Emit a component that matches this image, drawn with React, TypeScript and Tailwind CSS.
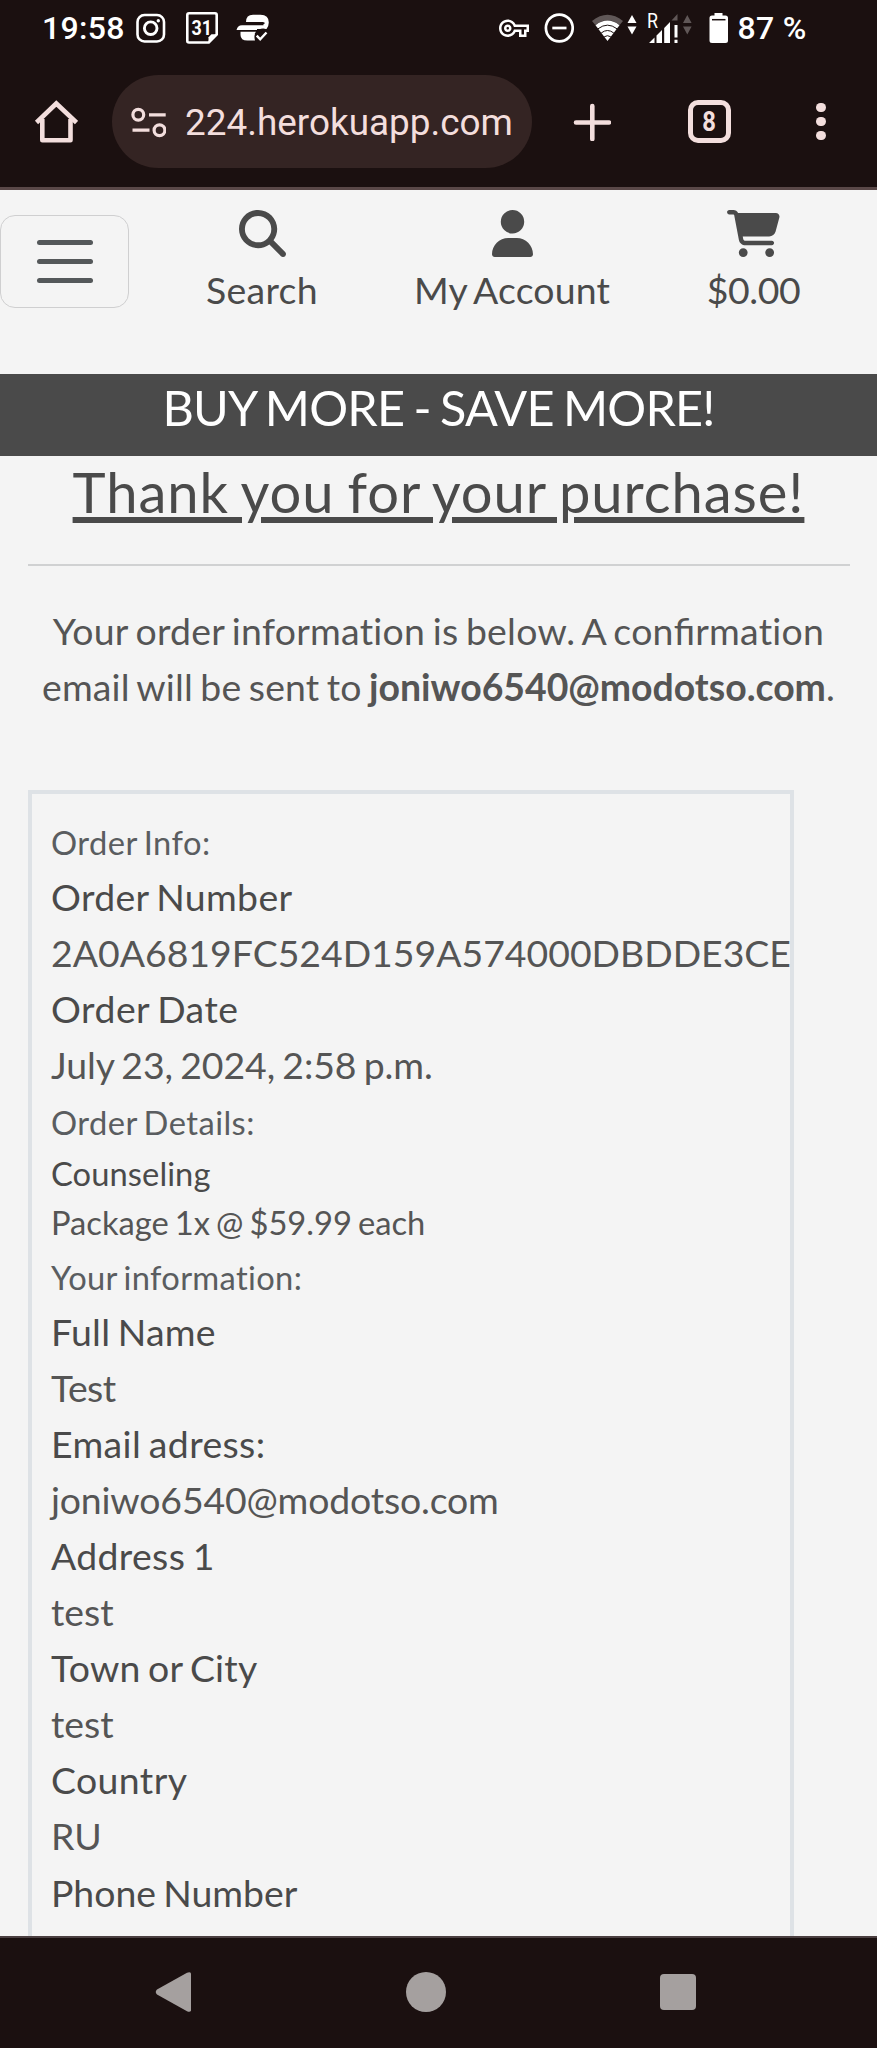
import type { ReactNode } from "react";
import { FaCartShopping, FaMagnifyingGlass, FaUser } from "react-icons/fa6";

function StatusBar() {
  return (
    <div className="flex h-14 items-start font-[Roboto,sans-serif] text-[32px] leading-[56px] font-medium text-white">
      <span className="ml-[42px] w-[94px] shrink-0 tracking-[0.3px] whitespace-nowrap">19:58</span>
      <svg className="h-14 w-[30px] shrink-0" viewBox="136 0 30 56" fill="none" stroke="currentColor" strokeWidth="2.6">
        <rect x="137.5" y="15" width="26.500" height="26.500" rx="7" />
        <circle cx="150.700" cy="28.200" r="6.300" strokeWidth="2.900" />
        <circle cx="158.300" cy="20.700" r="1.700" fill="currentColor" stroke="none" />
      </svg>
      <svg className="ml-5 h-14 w-8 shrink-0" viewBox="186 0 32 56" fill="none" stroke="currentColor" strokeWidth="2.6">
        <path d="M189 13.3H215Q216.700 13.300 216.700 15V34.500L208.800 42.500H189Q187.300 42.500 187.300 41V15Q187.300 13.300 189 13.300Z" />
        <path d="M216 34.200H211.500L208.500 37.200V42Z" fill="currentColor" stroke="none" />
        <text x="191.600" y="34.700" fontSize="20" fontWeight="700" textLength="20.500" lengthAdjust="spacingAndGlyphs" fill="currentColor" stroke="none">31</text>
      </svg>
      <svg className="ml-[18px] h-14 w-[34px] shrink-0" viewBox="236 0 34 56">
        <path d="M246 22Q246 14.700 253 14.700H260.500Q268.800 14.700 268.800 22.500Q268.800 26 266.500 29H257V30H236.500Q237.500 25.500 242 25.300H263.500V22Z" fill="currentColor" />
        <path d="M240.500 31.800H256Q253.500 35.500 255 40.500H247.500Q240.500 40.500 240.500 35Z" fill="currentColor" />
        <path d="M246.500 23.200H264.500" stroke="#1b1010" strokeWidth="1.600" />
        <path d="M255.500 34.500Q261 27 268 31" fill="none" stroke="#1b1010" strokeWidth="2.200" />
        <path d="M256.700 35.700L260.200 39.300L266.500 32.500" fill="none" stroke="currentColor" strokeWidth="2.400" />
      </svg>
      <svg className="ml-[229px] h-14 w-[30px] shrink-0" viewBox="0 -10.600 24 44.800" fill="currentColor">
        <path d="M22 19h-6v-4h-2.680c-1.140 2.420-3.600 4-6.320 4-3.860 0-7-3.140-7-7s3.140-7 7-7c2.720 0 5.170 1.580 6.320 4H24v6h-2v4zm-4-2h2v-4h2v-2H11.940l-.23-.67C11.010 8.340 9.110 7 7 7c-2.760 0-5 2.240-5 5s2.240 5 5 5c2.110 0 4.010-1.340 4.710-3.330l.23-.67H18v4zM7 15c-1.650 0-3-1.350-3-3s1.350-3 3-3 3 1.350 3 3-1.350 3-3 3zm0-4c-.55 0-1 .45-1 1s.45 1 1 1 1-.45 1-1-.45-1-1-1z" />
      </svg>
      <svg className="ml-[15px] h-14 w-[30px] shrink-0" viewBox="544 0 30 56" fill="none" stroke="currentColor" strokeWidth="2.700">
        <circle cx="559.300" cy="28" r="13.400" />
        <path d="M552.300 28H566.500" />
      </svg>
      <svg className="ml-[18px] h-14 w-[46px] shrink-0" viewBox="592 0 46 56">
        <path d="M592 21Q607.500 8.500 623 21L619.700 25Q607.500 15.500 595.300 25Z" fill="#605757" />
        <path d="M595.500 25.200Q607.500 16 619.500 25.200L607.500 41Z" fill="currentColor" />
        <path d="M598 28.800Q607.500 21.500 617 28.800M601.200 33Q607.500 28 613.800 33M604.200 36.800Q607.500 34.600 610.800 36.800" fill="none" stroke="#1b1010" strokeWidth="1" />
        <path d="M632 15L636.500 23H627.500ZM632 34.500L627.500 26.500H636.500Z" fill="currentColor" />
      </svg>
      <svg className="ml-[9px] h-14 w-[46px] shrink-0" viewBox="647 0 46 56" fill="currentColor">
        <text x="647" y="27.500" fontSize="20" fontWeight="400" textLength="11" lengthAdjust="spacingAndGlyphs">R</text>
        <path d="M649 43L654.500 37.500V43ZM656.500 35.500L662 30V43H656.500ZM664.200 28L670 22V43H664.200Z" />
        <path d="M671.500 20.500L677.500 14V20.500Z" fill="#605757" />
        <path d="M674.500 25H677.500V37.500H674.500ZM674.500 39.800H677.500V43H674.500Z" />
        <path d="M687.300 15L691.600 23H683ZM687.300 34.500L683 26.500H691.600Z" fill="#605757" />
      </svg>
      <svg className="ml-4 h-14 w-5 shrink-0" viewBox="709 0 20 56">
        <path d="M714.500 13H722.500V15.500H725.500Q728 15.500 728 18V40.500Q728 43 725.500 43H712Q709.500 43 709.500 40.500V18Q709.500 15.500 712 15.500H714.500Z" fill="currentColor" />
        <path d="M712 19.700H725.500" stroke="#1b1010" strokeWidth="1.500" />
      </svg>
      <span className="ml-[8.500px] tracking-[0.3px] whitespace-nowrap">87 %</span>
    </div>
  );
}

function BrowserBar() {
  return (
    <div className="flex h-[131px] items-center text-[#f3dedd]">
      <svg className="ml-[34px] h-[46px] w-11 shrink-0" viewBox="34 99 44 46" fill="none" stroke="currentColor" strokeWidth="4.600" strokeLinejoin="round">
        <path d="M36.500 122.500L56.300 103.500L76.500 122.500" strokeLinejoin="miter" />
        <path d="M42.300 119V140.200H70.500V119" />
      </svg>
      <div className="ml-[34px] flex h-[93px] w-[420px] shrink-0 items-center overflow-hidden rounded-full bg-[#342423]">
        <svg className="ml-[18px] h-8 w-9 shrink-0" viewBox="130 105 36 32" fill="none" stroke="currentColor" strokeWidth="3.200">
          <circle cx="138.300" cy="113.800" r="5.400" />
          <circle cx="159.500" cy="129.200" r="5.400" />
          <path d="M149 113.800H165.700M132.500 129.200H149.500" />
        </svg>
        <span className="ml-[19px] pt-[3px] font-[Roboto,sans-serif] text-[36.900px] leading-[50px] whitespace-nowrap">224.herokuapp.com</span>
      </div>
      <svg className="ml-[41px] h-[38px] w-[38px] shrink-0" viewBox="573 102 38 38" fill="none" stroke="currentColor" strokeWidth="4.600" strokeLinecap="round">
        <path d="M576 121.500H609M592.300 105V138" />
      </svg>
      <div className="ml-[77px] flex h-[43px] w-[43px] shrink-0 items-center justify-center rounded-[10px] border-[5px] border-[#f3dedd] font-[Roboto,sans-serif] text-[28px] leading-none font-bold">
        <span className="block scale-x-[0.85]">8</span>
      </div>
      <div className="ml-[85px] flex flex-col gap-[4.500px]">
        <i className="size-[9.600px] rounded-full bg-[#f3dedd]" />
        <i className="size-[9.600px] rounded-full bg-[#f3dedd]" />
        <i className="size-[9.600px] rounded-full bg-[#f3dedd]" />
      </div>
    </div>
  );
}

function NavItem({ className, icon, label }: { className: string; icon: ReactNode; label: string }) {
  return (
    <a className={`flex shrink-0 flex-col items-center text-[#4a4a4a] ${className}`}>
      {icon}
      <span className="mt-[4.500px] leading-[56px] whitespace-nowrap">{label}</span>
    </a>
  );
}

function SiteHeader() {
  return (
    <header className="flex h-[184px] shrink-0 items-start">
      <button className="mt-[25px] flex h-[93px] w-[129px] shrink-0 flex-col items-center justify-center gap-[14px] rounded-[15px] border-[1.500px] border-[#cfcfd0]">
        <span className="h-[4.700px] w-14 rounded-full bg-[#54585a]" />
        <span className="h-[4.700px] w-14 rounded-full bg-[#54585a]" />
        <span className="h-[4.700px] w-14 rounded-full bg-[#54585a]" />
      </button>
      <NavItem className="mt-5 ml-[73px] w-[120px] tracking-[0.3px]" icon={<FaMagnifyingGlass className="size-[47px]" />} label="Search" />
      <NavItem className="mt-5 ml-[80px] w-[220px] tracking-[0.15px]" icon={<FaUser className="h-[47px] w-[41px]" />} label="My Account" />
      <NavItem className="mt-5 ml-[71.500px] w-[120px] tracking-[-0.4px]" icon={<FaCartShopping className="h-[47px] w-[53px]" />} label="$0.00" />
    </header>
  );
}

function Label({ className = "", children }: { className?: string; children: ReactNode }) {
  return <p className={`text-[#4a4a4a] ${className}`}>{children}</p>;
}

function SmallHeading({ className, children }: { className: string; children: ReactNode }) {
  return (
    <div className="h-[56.100px]">
      <small className={`text-[32.700px] text-[#5a5d60] ${className}`}>{children}</small>
    </div>
  );
}

function OrderCard() {
  return (
    <section className="mt-[74.800px] ml-7 w-[766px] flex-1 border-4 border-b-0 border-[#dee2e6] pt-[18.400px] pl-[19px] whitespace-nowrap">
      <SmallHeading className="tracking-[0.47px]">Order Info:</SmallHeading>
      <Label className="tracking-[0.35px]">Order Number</Label>
      <p>2A0A6819FC524D159A574000DBDDE3CE</p>
      <Label className="tracking-[0.5px]">Order Date</Label>
      <p className="tracking-[-0.05px]">July 23, 2024, 2:58 p.m.</p>
      <SmallHeading className="tracking-[0.45px]">Order Details:</SmallHeading>
      <p className="text-[32.700px] leading-[49.100px] tracking-[0.08px] text-[#4a4a4a]">Counseling</p>
      <p className="text-[32.700px] leading-[49.100px]">Package 1x @ $59.99 each</p>
      <SmallHeading className="tracking-[0.34px]">Your information:</SmallHeading>
      <Label className="tracking-[0.25px]">Full Name</Label>
      <p className="tracking-[-0.6px]">Test</p>
      <Label className="tracking-[0.4px]">Email adress:</Label>
      <p className="tracking-[-0.16px]">joniwo6540@modotso.com</p>
      <Label className="tracking-[0.35px]">Address 1</Label>
      <p>test</p>
      <Label className="tracking-[0.22px]">Town or City</Label>
      <p>test</p>
      <Label className="tracking-[0.4px]">Country</Label>
      <p>RU</p>
      <Label>Phone Number</Label>
    </section>
  );
}

function SystemNav() {
  return (
    <nav className="flex h-[112px] shrink-0 items-center border-t-2 border-[#4b3f41] bg-[#1b1010] pb-[2px] text-[#a5a09f]">
      <svg className="ml-[155px] h-10 w-9" viewBox="155 1972 36 40" fill="currentColor">
        <path d="M157 1989.500L187 1972.700Q191.300 1971 191.300 1975V2009Q191.300 2013 187 2011.300L157 1994.500Q154.500 1992 157 1989.500Z" />
      </svg>
      <span className="ml-[215px] size-10 rounded-full bg-[#a5a09f]" />
      <span className="ml-[213.500px] size-9 rounded-[4px] bg-[#a5a09f]" />
    </nav>
  );
}

export default function App() {
  return (
    <div className="flex h-[2048px] w-[877px] flex-col overflow-hidden bg-[#f4f4f4] font-[Lato,sans-serif] text-[37.400px] leading-[56.100px] text-[#555]">
      <div className="h-[190px] shrink-0 border-b-[3px] border-[#5a4848] bg-[#1b1010]">
        <StatusBar />
        <BrowserBar />
      </div>
      <main className="flex min-h-0 flex-1 flex-col overflow-hidden [word-spacing:-0.063em]">
        <SiteHeader />
        <div className="h-[82px] shrink-0 bg-[#4a4a4a] pt-[3.500px] text-center text-[48.600px] leading-[58px] tracking-[-0.8px] text-white">BUY MORE - SAVE MORE!</div>
        <h1 className="h-[108px] shrink-0 pt-[2px] text-center text-[56.100px] leading-[67.300px] tracking-[0.95px] text-[#4a4a4a] underline decoration-[5.600px] underline-offset-[4px]">Thank you for your purchase!</h1>
        <hr className="mr-[27px] ml-7 shrink-0 border-t-2 border-[#d0d1d2]" />
        <p className="mt-[37.400px] shrink-0 text-center tracking-[0.27px]">
          Your order information is below. A con<span className="tracking-normal">fi</span>rmation
          <br />
          <span className="tracking-[0.17px]">email will be sent to </span>
          <strong className="font-bold tracking-[-0.02px]">joniwo6540@modotso.com</strong>.
        </p>
        <OrderCard />
      </main>
      <SystemNav />
    </div>
  );
}
